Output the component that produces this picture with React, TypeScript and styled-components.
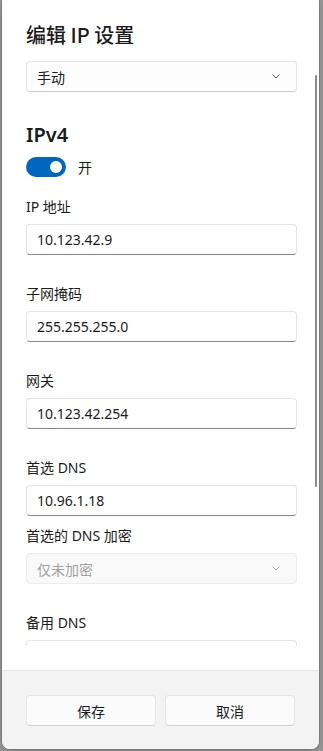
import { createGlobalStyle, styled } from "styled-components";

const GlobalStyle = createGlobalStyle`
  html, body {
    margin: 0;
    padding: 0;
    height: 100%;
    background: #9a9a9a;
    overflow: hidden;
  }
  body {
    font-family: "Noto Sans", "Noto Sans CJK SC", sans-serif;
    color: #1b1b1b;
  }
  * {
    box-sizing: border-box;
  }
`;

const Stage = styled.div`
  display: flex;
  padding-left: 2px;
`;

const Dialog = styled.div`
  position: relative;
  width: 317px;
  height: 749px;
  background: #ffffff;
  border-radius: 0 0 8px 8px;
  box-shadow: 0 0 0 1px rgba(0, 0, 0, 0.12), 0 4px 12px rgba(0, 0, 0, 0.18);
  display: flex;
  flex-direction: column;
  overflow: hidden;
`;

const Body = styled.div`
  height: 670px;
  flex-shrink: 0;
`;

const Scroller = styled.div`
  height: 646px;
  overflow: hidden;
  padding: 0 22px 0 24px;
`;

const ScrollThumb = styled.div`
  position: absolute;
  left: 313px;
  top: 75px;
  width: 2px;
  height: 412px;
  border-radius: 1px;
  background: #8a8a8a;
`;

const Title = styled.h1`
  margin: 21px 0 0;
  font-size: 20px;
  line-height: 28px;
  font-weight: 500;
  font-family: "Noto Sans CJK SC", sans-serif;
`;

const Select = styled.div<{ $disabled?: boolean }>`
  display: flex;
  align-items: center;
  justify-content: space-between;
  height: 31px;
  margin-top: ${(p) => (p.$disabled ? "0" : "12px")};
  padding: 0 16px 0 10px;
  border: 1px solid ${(p) => (p.$disabled ? "#ececec" : "#e3e3e3")};
  border-bottom-color: ${(p) => (p.$disabled ? "#ececec" : "#cfcfcf")};
  border-radius: 4px;
  background: ${(p) => (p.$disabled ? "#f9f9f9" : "#fdfdfd")};
  color: ${(p) => (p.$disabled ? "#a2a2a2" : "#1b1b1b")};
  font-size: 14px;
  font-family: "Noto Sans CJK SC", sans-serif;
`;

const Chevron = styled.svg<{ $disabled?: boolean }>`
  width: 8px;
  height: 5px;
  stroke: ${(p) => (p.$disabled ? "#b5b5b5" : "#5c5c5c")};
`;

const Heading = styled.h2`
  margin: 29px 0 0;
  font-size: 20px;
  line-height: 28px;
  font-weight: 600;
`;

const ToggleRow = styled.div`
  display: flex;
  align-items: center;
  gap: 12px;
  margin-top: 8px;
  font-size: 14px;
  font-family: "Noto Sans CJK SC", sans-serif;
`;

const Toggle = styled.div`
  position: relative;
  width: 40px;
  height: 20px;
  border-radius: 10px;
  background: #0067c0;

  &::after {
    content: "";
    position: absolute;
    right: 4px;
    top: 4px;
    width: 12px;
    height: 12px;
    border-radius: 50%;
    background: #ffffff;
  }
`;

const Field = styled.div<{ $top: number }>`
  margin-top: ${(p) => p.$top}px;
`;

const Label = styled.div`
  font-size: 14px;
  line-height: 20px;
  margin-bottom: 7px;
`;

const Input = styled.div`
  display: flex;
  align-items: center;
  height: 31px;
  padding: 0 10px;
  border: 1px solid #e5e5e5;
  border-bottom-color: #8a8a8a;
  border-radius: 4px;
  background: #ffffff;
  font-size: 14px;
`;

const Footer = styled.div`
  flex: 1;
  display: grid;
  grid-template-columns: 1fr 1fr;
  gap: 9px;
  align-items: start;
  padding: 24px 24px 0;
  background: #f3f3f3;
  border-top: 1px solid #e5e5e5;
`;

const Button = styled.button`
  height: 31px;
  border: 1px solid #e5e5e5;
  border-bottom-color: #d2d2d2;
  border-radius: 4px;
  background: #fbfbfb;
  color: #1b1b1b;
  font-size: 14px;
  font-family: "Noto Sans CJK SC", sans-serif;
`;

const ChevronIcon = ({ disabled }: { disabled?: boolean }) => (
  <Chevron $disabled={disabled} viewBox="0 0 8 5" fill="none" strokeWidth="1">
    <polyline points="0.5,0.5 4,4 7.5,0.5" />
  </Chevron>
);

const fields = [
  { label: "IP 地址", value: "10.123.42.9" },
  { label: "子网掩码", value: "255.255.255.0" },
  { label: "网关", value: "10.123.42.254" },
  { label: "首选 DNS", value: "10.96.1.18" },
];

const App = (): JSX.Element => {
  return (
    <>
      <GlobalStyle />
      <Stage>
        <Dialog>
          <Body>
            <Scroller>
              <Title>编辑 IP 设置</Title>
              <Select>
                <span>手动</span>
                <ChevronIcon />
              </Select>
              <Heading>IPv4</Heading>
              <ToggleRow>
                <Toggle />
                <span>开</span>
              </ToggleRow>
              {fields.map((field, i) => (
                <Field key={field.label} $top={i === 0 ? 20 : 29}>
                  <Label>{field.label}</Label>
                  <Input>{field.value}</Input>
                </Field>
              ))}
              <Field $top={10}>
                <Label>首选的 DNS 加密</Label>
                <Select $disabled>
                  <span>仅未加密</span>
                  <ChevronIcon disabled />
                </Select>
              </Field>
              <Field $top={29}>
                <Label>备用 DNS</Label>
                <Input />
              </Field>
            </Scroller>
          </Body>
          <ScrollThumb />
          <Footer>
            <Button>保存</Button>
            <Button>取消</Button>
          </Footer>
        </Dialog>
      </Stage>
    </>
  );
};

export default App;
